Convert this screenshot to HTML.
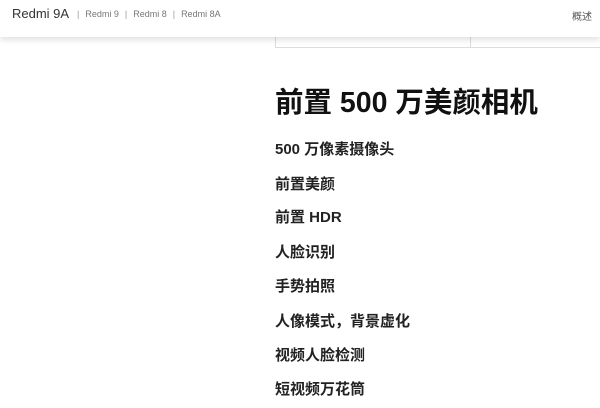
<!DOCTYPE html>
<html><head><meta charset="utf-8"><style>
body{margin:0;width:600px;height:408px;overflow:hidden;background:#fff;font-family:"Liberation Sans","Noto Sans CJK SC",sans-serif;position:relative}
.hdr{position:absolute;left:0;top:0;width:600px;height:37px;background:#fff;box-shadow:0 3px 6px rgba(0,0,0,.12);z-index:2}
.brand{position:absolute;left:12px;top:6px;font-size:13px;color:#333}
.links{position:absolute;left:71px;top:9px;font-size:9px;color:#777}
.links span{margin:0 6px;color:#999}
.ov{position:absolute;left:572px;top:8px;font-size:10px;color:#555}
.tbl{position:absolute;left:275px;top:30px;width:330px;height:17px;border:1px solid #ddd;border-top:none}
.tbl i{position:absolute;left:194px;top:0;height:17px;border-left:1px solid #ddd}
h1{position:absolute;left:275px;top:86px;margin:0;font-size:28.5px;font-weight:bold;color:#111;line-height:34px}
.it{position:absolute;left:275px;font-size:15px;font-weight:bold;color:#222;line-height:18px}
</style></head><body>
<div class="hdr"><div class="brand">Redmi 9A</div><div class="links"><span>|</span>Redmi 9<span>|</span>Redmi 8<span>|</span>Redmi 8A</div><div class="ov">概述</div></div>
<div class="tbl"><i></i></div>
<h1>前置 500 万美颜相机</h1>
<div class="it" style="top:141px">500 万像素摄像头</div>
<div class="it" style="top:176px">前置美颜</div>
<div class="it" style="top:209px">前置 HDR</div>
<div class="it" style="top:244px">人脸识别</div>
<div class="it" style="top:278px">手势拍照</div>
<div class="it" style="top:313px">人像模式，背景虚化</div>
<div class="it" style="top:347px">视频人脸检测</div>
<div class="it" style="top:381px">短视频万花筒</div>
</body></html>
